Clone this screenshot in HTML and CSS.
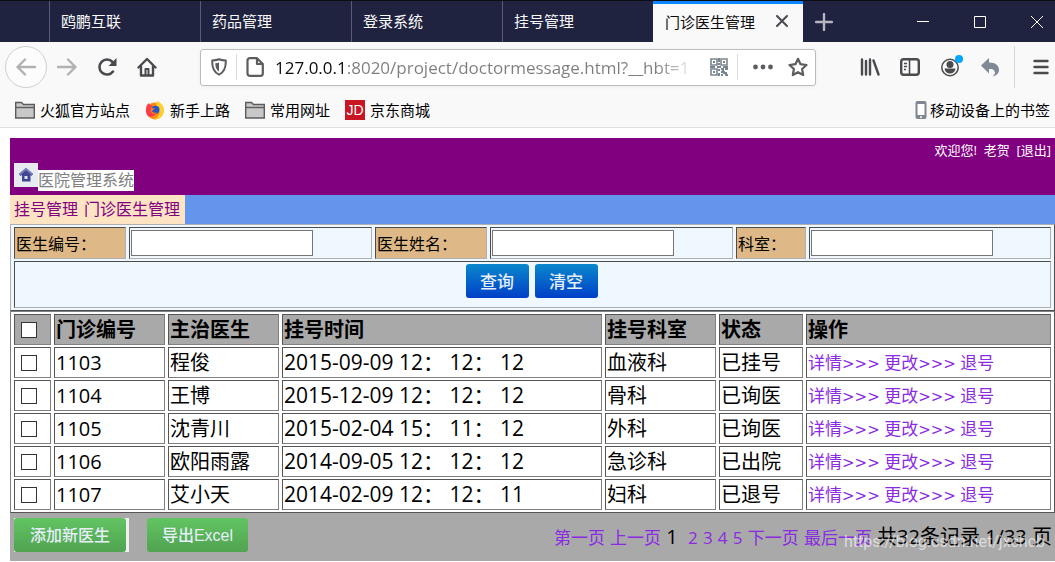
FILE: index.html
```html
<!DOCTYPE html>
<html lang="zh-CN">
<head>
<meta charset="utf-8">
<title>门诊医生管理</title>
<link rel="stylesheet" href="styles.css">
</head>
<body>
<header class="browser">
  <nav class="tabs">
    <a class="tab" href="#">鸥鹏互联</a>
    <a class="tab" href="#">药品管理</a>
    <a class="tab" href="#">登录系统</a>
    <a class="tab" href="#">挂号管理</a>
    <div class="tab tab-active">
      <a href="#">门诊医生管理</a>
      <button class="icon-button" aria-label="关闭标签页"><svg width="12" height="12" viewBox="0 0 12 12"><path d="M1 1L11 11M11 1L1 11" stroke="#4a4a4f" stroke-width="2" stroke-linecap="round"/></svg></button>
    </div>
    <button class="icon-button new-tab" aria-label="新标签页"><svg width="18" height="18" viewBox="0 0 18 18"><path d="M9 1V17M1 9H17" stroke="#b4b5c0" stroke-width="2.400" stroke-linecap="round"/></svg></button>
    <div class="window-controls">
      <button class="icon-button" aria-label="最小化"><svg width="12" height="12" viewBox="0 0 12 12"><path d="M0 5.500H12" stroke="#fff"/></svg></button>
      <button class="icon-button" aria-label="最大化"><svg width="12" height="12" viewBox="0 0 12 12"><path d="M.5 .5H11.500V11.500H.5Z" fill="none" stroke="#fff"/></svg></button>
      <button class="icon-button" aria-label="关闭"><svg width="14" height="14" viewBox="0 0 14 14"><path d="M1 1L13 13M13 1L1 13" stroke="#fff"/></svg></button>
    </div>
  </nav>

  <div class="toolbar">
    <div class="tools">
      <button class="icon-button back" aria-label="后退"><svg width="20" height="20" viewBox="0 0 20 20" fill="none" stroke="#b1b1b3" stroke-width="2.400" stroke-linecap="round" stroke-linejoin="round"><path d="M19 10H2M9 2.500L1.500 10L9 17.500"/></svg></button>
      <button class="icon-button" aria-label="前进"><svg width="20" height="20" viewBox="0 0 20 20" fill="none" stroke="#b1b1b3" stroke-width="2.400" stroke-linecap="round" stroke-linejoin="round"><path d="M1 10H18M11 2.500L18.500 10L11 17.500"/></svg></button>
      <button class="icon-button" aria-label="刷新"><svg width="20" height="20" viewBox="0 0 20 20"><path d="M16 14.500A7.500 7.500 0 1 1 15.500 5" fill="none" stroke="#4a4a4f" stroke-width="2.600" stroke-linecap="round"/><path d="M19.500 1V9H11.500Z" fill="#4a4a4f"/></svg></button>
      <button class="icon-button" aria-label="主页"><svg width="20" height="20" viewBox="0 0 20 20" fill="none" stroke="#4a4a4f" stroke-width="2.400" stroke-linecap="round" stroke-linejoin="round"><path d="M1.500 10.500L10 2L18.500 10.500M4 9V18.500H16V9"/><path d="M8.500 18V12H11.500V18" stroke-width="2"/></svg></button>
    </div>
    <div class="address">
      <svg width="16" height="18" viewBox="0 0 16 18"><path d="M8 1.200C10 2 12.500 2.400 14.800 2.500C15 9 14 14 8 16.700C2 14 1 9 1.200 2.500C3.500 2.400 6 2 8 1.200Z" fill="none" stroke="#5c5c61" stroke-width="2" stroke-linejoin="round"/><path d="M8 4.500V13.500C5 11.500 4.300 9 4.300 5.200C5.800 5.200 7 4.900 8 4.500Z" fill="#5c5c61"/></svg>
      <span class="address-rule"></span>
      <svg width="18" height="20" viewBox="0 0 18 20"><path d="M4 1.200H11L16.800 7V16.500Q16.800 18.800 14.500 18.800H4Q1.500 18.800 1.500 16.500V3.500Q1.500 1.200 4 1.200ZM11 1.500V7H16.500" fill="none" stroke="#5c5c61" stroke-width="2.200" stroke-linejoin="round"/></svg>
      <input class="url" type="text" aria-label="网址" value="127.0.0.1:8020/project/doctormessage.html?__hbt=1">
      <svg class="qr" width="18" height="18" viewBox="0 0 18 18" fill="none" stroke="#7b8590" stroke-width="1.600"><path d="M1 1H7V7H1ZM11 1H17V7H11ZM1 11H7V17H1Z"/><path d="M3 4H5M13 4H15M3 14H5M9 0V4M8 6H10M0 9H5M7 9H11M13 9H18M9 11V13M11 11H13V13M15 11H18M14 13V15H17M9 15V18M11 17H13M11 14H13M15 17H18" stroke-width="2"/></svg>
      <span class="address-rule"></span>
      <svg class="dots" width="20" height="6" viewBox="0 0 20 6" fill="#5c5c61"><circle cx="2.500" cy="3" r="2.400"/><circle cx="10" cy="3" r="2.400"/><circle cx="17.500" cy="3" r="2.400"/></svg>
      <svg width="20" height="20" viewBox="0 0 20 20"><path d="M10 1.800L12.500 7.200L18.500 8L14.100 12L15.200 18L10 15.200L4.800 18L5.900 12L1.500 8L7.500 7.200Z" fill="none" stroke="#5c5c61" stroke-width="2.200" stroke-linejoin="round"/></svg>
    </div>
    <div class="tools tools-right">
      <button class="icon-button" aria-label="书库"><svg width="20" height="18" viewBox="0 0 20 18" stroke="#4a4a4f" stroke-width="2.400" stroke-linecap="round"><path d="M2 1.500V16.500M6 3V16.500M10 1.500V16.500M13.500 2.500L18.500 16.500"/></svg></button>
      <button class="icon-button" aria-label="侧栏"><svg width="20" height="18" viewBox="0 0 20 18" fill="none" stroke="#4a4a4f"><rect x="1.200" y="1.200" width="17.600" height="15.600" rx="2.500" stroke-width="2.400"/><path d="M9.500 2V16" stroke-width="1.600"/><path d="M4 5.500H7M4 8.500H7M4 11.500H6" stroke-width="1.300"/></svg></button>
      <button class="icon-button" aria-label="账户"><svg width="26" height="24" viewBox="0 0 26 24"><circle cx="13" cy="12.500" r="8.200" fill="none" stroke="#4a4a4f" stroke-width="1.500"/><circle cx="13" cy="9.500" r="3.500" fill="#4a4a4f"/><path d="M7.500 13.500H18.500C18 17 16 18.500 13 18.500S8 17 7.500 13.500Z" fill="#4a4a4f"/><circle cx="22" cy="4" r="4" fill="#00a7ff"/></svg></button>
      <button class="icon-button" aria-label="撤销"><svg width="20" height="20" viewBox="0 0 20 20"><path d="M9 1V5.500C16 5.500 19 9 19 13C19 16 17 18.500 12.500 19.500C15 17.500 15.500 16 14.500 14C13.500 12.300 12 12 9 12V16.500L1 8.500Z" fill="#7f8a96"/></svg></button>
    </div>
    <button class="icon-button menu" aria-label="菜单"><svg width="16" height="18" viewBox="0 0 16 18" stroke="#4a4a4f" stroke-width="2.400" stroke-linecap="round"><path d="M1.500 3H14.500M1.500 9H14.500M1.500 15H14.500"/></svg></button>
  </div>

  <nav class="bookmarks">
    <a href="#"><svg width="20" height="18" viewBox="0 0 20 18" fill="#c8c8c8" stroke="#5c5c5c" stroke-width="1.400"><path d="M.7 17V1.500H6.500L8.500 3.500H19.300V17Z"/><path d="M1 6.500H19"/></svg>火狐官方站点</a>
    <a href="#"><svg width="20" height="20" viewBox="0 0 20 20"><circle cx="10" cy="11" r="8.500" fill="#ff8a16"/><path d="M12 1C18 3 20 9 18.500 13.500C17 18 12 20 8 19.300C15 18 16 10 12 6.500C11 4.500 11.200 2.500 12 1Z" fill="#ffcf2e"/><path d="M2 5L4 3L5.500 5.500L8 5L6.500 7.500C5 9 6 14 11 14C9 16 5 18 3 16C0 12.500 .8 8 2 5Z" fill="#ff3b47"/><circle cx="10.500" cy="9.700" r="4" fill="#2458c8"/><path d="M5.500 8.500L9.500 8C9 10 7.500 10 7 11C8 13 10 13 12 12C10.500 15 5.500 15 5.500 8.500Z" fill="#ff7b15"/></svg>新手上路</a>
    <a href="#"><svg width="20" height="18" viewBox="0 0 20 18" fill="#c8c8c8" stroke="#5c5c5c" stroke-width="1.400"><path d="M.7 17V1.500H6.500L8.500 3.500H19.300V17Z"/><path d="M1 6.500H19"/></svg>常用网址</a>
    <a href="#"><span class="jd">JD</span>京东商城</a>
    <a class="mobile" href="#"><svg width="12" height="18" viewBox="0 0 12 18"><rect x=".5" width="11" height="18" rx="2" fill="#7f8790"/><rect x="2.500" y="3" width="7" height="11" fill="#fff"/><circle cx="6" cy="16" r="1" fill="#fff"/></svg>移动设备上的书签</a>
  </nav>
</header>

<main class="page">
  <div class="banner">
    <p class="welcome">欢迎您!&nbsp; 老贺&nbsp; [<a href="#">退出</a>]</p>
    <div class="brand">
      <svg class="brand-icon" width="24" height="24" viewBox="0 0 24 24"><path d="M12 5L5 11L6.500 13L8 12V18.500H16.500V12L17.500 13L19 11Z" fill="#3f4592"/><path d="M5.500 11.500L12 6L18.500 11.500" fill="none" stroke="#7b80b8" stroke-width="2"/><rect x="10.500" y="13" width="3" height="3" fill="#dfe3f5"/></svg>
      <h1 class="brand-name">医院管理系统</h1>
    </div>
  </div>
  <nav class="crumbs"><div class="crumb-trail"><a href="#">挂号管理</a><a href="#">门诊医生管理</a></div></nav>

  <form>
    <table class="grid search">
      <colgroup><col class="w-label"><col class="w-field"><col class="w-label"><col class="w-field"><col class="w-short"><col></colgroup>
      <tr>
        <th scope="row"><label for="doctor-id">医生编号：</label></th>
        <td><input class="field" id="doctor-id" type="text"></td>
        <th scope="row"><label for="doctor-name">医生姓名：</label></th>
        <td><input class="field" id="doctor-name" type="text"></td>
        <th scope="row"><label for="dept">科室：</label></th>
        <td><input class="field" id="dept" type="text"></td>
      </tr>
      <tr>
        <td colspan="6"><div class="search-actions"><button class="btn btn-blue" type="submit">查询</button><button class="btn btn-blue" type="reset">清空</button></div></td>
      </tr>
    </table>
  </form>

  <table class="grid records">
    <colgroup><col class="w-check"><col class="w-text"><col class="w-text"><col class="w-time"><col class="w-text"><col class="w-status"><col></colgroup>
    <thead>
      <tr><th><input type="checkbox" aria-label="全选"></th><th>门诊编号</th><th>主治医生</th><th>挂号时间</th><th>挂号科室</th><th>状态</th><th>操作</th></tr>
    </thead>
    <tbody>
      <tr><td><input type="checkbox" aria-label="选择 1103"></td><td>1103</td><td>程俊</td><td class="time">2015-09-09 12： 12： 12</td><td>血液科</td><td>已挂号</td><td class="ops"><a href="#">详情<span class="arrows">&gt;&gt;&gt;</span></a> <a href="#">更改<span class="arrows">&gt;&gt;&gt;</span></a> <a href="#">退号</a></td></tr>
      <tr><td><input type="checkbox" aria-label="选择 1104"></td><td>1104</td><td>王博</td><td class="time">2015-12-09 12： 12： 12</td><td>骨科</td><td>已询医</td><td class="ops"><a href="#">详情<span class="arrows">&gt;&gt;&gt;</span></a> <a href="#">更改<span class="arrows">&gt;&gt;&gt;</span></a> <a href="#">退号</a></td></tr>
      <tr><td><input type="checkbox" aria-label="选择 1105"></td><td>1105</td><td>沈青川</td><td class="time">2015-02-04 15： 11： 12</td><td>外科</td><td>已询医</td><td class="ops"><a href="#">详情<span class="arrows">&gt;&gt;&gt;</span></a> <a href="#">更改<span class="arrows">&gt;&gt;&gt;</span></a> <a href="#">退号</a></td></tr>
      <tr><td><input type="checkbox" aria-label="选择 1106"></td><td>1106</td><td>欧阳雨露</td><td class="time">2014-09-05 12： 12： 12</td><td>急诊科</td><td>已出院</td><td class="ops"><a href="#">详情<span class="arrows">&gt;&gt;&gt;</span></a> <a href="#">更改<span class="arrows">&gt;&gt;&gt;</span></a> <a href="#">退号</a></td></tr>
      <tr><td><input type="checkbox" aria-label="选择 1107"></td><td>1107</td><td>艾小天</td><td class="time">2014-02-09 12： 12： 11</td><td>妇科</td><td>已退号</td><td class="ops"><a href="#">详情<span class="arrows">&gt;&gt;&gt;</span></a> <a href="#">更改<span class="arrows">&gt;&gt;&gt;</span></a> <a href="#">退号</a></td></tr>
    </tbody>
  </table>

  <footer class="footer">
    <div class="add-wrap"><button class="btn btn-green btn-add">添加新医生</button></div>
    <button class="btn btn-green btn-export">导出Excel</button>
    <nav class="pager"><a href="#">第一页</a> <a href="#">上一页</a> <span class="current">1</span> <a href="#">2</a> <a href="#">3</a> <a href="#">4</a> <a href="#">5</a> <a href="#">下一页</a> <a href="#">最后一页</a> <span>共32条记录 1/33 页</span></nav>
    <span class="watermark">https://blog.csdn.net/jxchcb</span>
  </footer>
</main>
</body>
</html>
```
FILE: styles.css
```css
* { box-sizing: border-box; }

body {
  margin: 0;
  background: #fff;
  color: #000;
  font-family: "Open Sans", "Noto Sans CJK SC", sans-serif;
  overflow-x: hidden;
}

a { color: inherit; text-decoration: none; }

.icon-button {
  display: flex;
  align-items: center;
  justify-content: center;
  padding: 0;
  border: 0;
  background: none;
}

/* Browser chrome */
.browser {
  background: #f9f9fa;
  border-bottom: 1px solid #e0e0e1;
  font-size: 15px;
}

.tabs {
  display: flex;
  height: 42px;
  padding-left: 49px;
  background: #202340;
  border-top: 1px solid #0c0c14;
  color: #f9f9fa;
}

.tab {
  display: flex;
  align-items: center;
  width: 151px;
  padding: 0 0 2px 11px;
  border-left: 1px solid #5a5c72;
}

.tab-active {
  justify-content: space-between;
  width: 150px;
  padding: 0 15px 4px 12px;
  background: #f9f9fa;
  border-left: 0;
  border-top: 3px solid #0a84ff;
  color: #0c0c0d;
}

.new-tab { width: 42px; }

.window-controls {
  display: flex;
  gap: 21px;
  margin-left: auto;
}
.window-controls .icon-button { width: 36px; }

.toolbar {
  display: flex;
  align-items: center;
  height: 50px;
  padding-left: 5px;
}

.tools { display: flex; }
.tools .icon-button { width: 40px; height: 42px; }
.tools .back {
  width: 42px;
  border: 1px solid #d0d0d2;
  border-radius: 50%;
  background: #fcfcfc;
}

.address {
  display: flex;
  align-items: center;
  flex: 1;
  min-width: 0;
  height: 37px;
  margin: 0 34px 0 33px;
  padding: 0 7px 0 10px;
  background: #fff;
  border: 1px solid #bcbcbc;
  border-radius: 3px;
  box-shadow: 0 1px 4px #0000000d;
}

.address-rule {
  width: 1px;
  height: 26px;
  margin: 0 9px;
  background: #dcdcdc;
}

.url {
  flex: 1;
  min-width: 0;
  height: 30px;
  margin-left: 11px;
  padding: 0;
  border: 0;
  outline: 0;
  background: linear-gradient(90deg, #0c0c0d 72px, #7d7d7d 72px, #7d7d7d calc(100% - 50px), #7d7d7d00 calc(100% - 12px)) text;
  color: transparent;
  font: 17px "Open Sans", sans-serif;
}

.qr { margin-left: 2px; }
.dots { margin: 0 15px 0 6px; }

.tools-right {
  padding-right: 4px;
  border-right: 1px solid #d7d7d8;
}

.menu { width: 28px; height: 42px; margin-left: 12px; }

.bookmarks {
  display: flex;
  align-items: center;
  gap: 15px;
  height: 35px;
  padding: 0 5px 0 15px;
  line-height: 20px;
}
.bookmarks a { display: flex; align-items: center; gap: 5px; }
.bookmarks .mobile { gap: 3px; margin-left: auto; }

.jd {
  width: 20px;
  height: 20px;
  background: #c81623;
  color: #fff;
  font: 14px/20px "Liberation Sans", sans-serif;
  text-align: center;
}

/* Hospital page */
.page { padding: 10px 0 0 10px; }

.banner {
  padding: 2px 4px 4px;
  background: #800080;
}
.welcome {
  margin: 0;
  color: #fff;
  font-size: 13px;
  line-height: 20px;
  text-align: right;
}
.brand { display: flex; align-items: flex-start; padding-top: 3px; }
.brand-icon { background: #e8eaf1; }
.brand-name {
  margin: 7px 0 0;
  background: #fff;
  color: #808080;
  font-size: 16px;
  font-weight: 400;
  line-height: 21px;
}

.crumbs { display: flex; background: #6495ed; }
.crumb-trail {
  display: flex;
  gap: 6px;
  padding: 0 5px 0 4px;
  background: #ffe4c4;
  color: #800080;
  font-size: 16px;
  line-height: 29px;
}

.grid {
  width: 100%;
  table-layout: fixed;
  border: 1px solid;
  border-collapse: separate;
  border-spacing: 3px 2px;
}
.grid th, .grid td {
  padding: 1px;
  border: 1px solid;
  text-align: left;
}

.search {
  background: #f0f8ff;
  border-color: #b0b0b0 #4d4d4d #4d4d4d #b0b0b0;
  font-size: 16px;
}
.search th, .search td { height: 32px; border-color: #4d4d4d #b0b0b0 #b0b0b0 #4d4d4d; }
.search th { background: #deb887; font-weight: 400; }
.search td[colspan] { height: 47px; }

.field {
  display: block;
  width: 182px;
  max-width: 100%;
  height: 26px;
  border: 1px solid #767676;
  background: #fff;
}

.search-actions {
  display: flex;
  justify-content: center;
  gap: 6px;
  padding: 0 2px 7px 0;
}

.records {
  border-color: #808080 #555 #555 #808080;
  font-size: 20px;
  line-height: 27px;
}
.records th, .records td { border-color: #555 #808080 #808080 #555; }
.records th { background: #a9a9a9; }

.records input {
  display: block;
  width: 16px;
  height: 16px;
  margin: 0 0 0 5px;
  border: 1px solid #333;
  background: #fff;
  appearance: none;
}

.w-label { width: 112px; }
.w-field { width: 243px; }
.w-short { width: 70px; }
.w-check { width: 37px; }
.w-text { width: 111px; }
.w-time { width: 320px; }
.w-status { width: 84px; }

.records .time { font-size: 21px; }
.records .ops { color: #8a2be2; font-size: 17px; line-height: 24px; }
.arrows {
  font-family: "DejaVu Sans", sans-serif;
  font-size: 15px;
  line-height: 16px;
}

.btn {
  height: 34px;
  padding: 0 0 2px;
  border: 0;
  border-radius: 3px;
  color: #e6eefa;
  font-family: inherit;
}
.btn-blue {
  width: 63px;
  background: linear-gradient(#0a88cc, #003fc8);
  font-size: 17px;
  font-weight: 500;
}
.btn-green {
  background: linear-gradient(#62c462, #51a351);
  font-size: 16px;
  font-weight: 500;
}
.add-wrap { padding-right: 3px; background: #f0f0f0; }
.btn-add { display: block; width: 112px; }
.btn-export { width: 101px; font-family: "Liberation Sans", "Noto Sans CJK SC", sans-serif; }

.footer {
  position: relative;
  display: flex;
  align-items: center;
  gap: 18px;
  min-height: 48px;
  padding: 0 3px 4px 4px;
  background: #a9a9a9;
}
.pager {
  margin-left: auto;
  padding-top: 4px;
  font-size: 20px;
  line-height: 28px;
  white-space: nowrap;
}
.pager a { color: #8a2be2; font-size: 17px; }
.current { padding-right: 5px; }

.watermark {
  position: absolute;
  right: 10px;
  bottom: 9px;
  color: #ffffff99;
  font: 16px/20px Roboto, sans-serif;
}
```
